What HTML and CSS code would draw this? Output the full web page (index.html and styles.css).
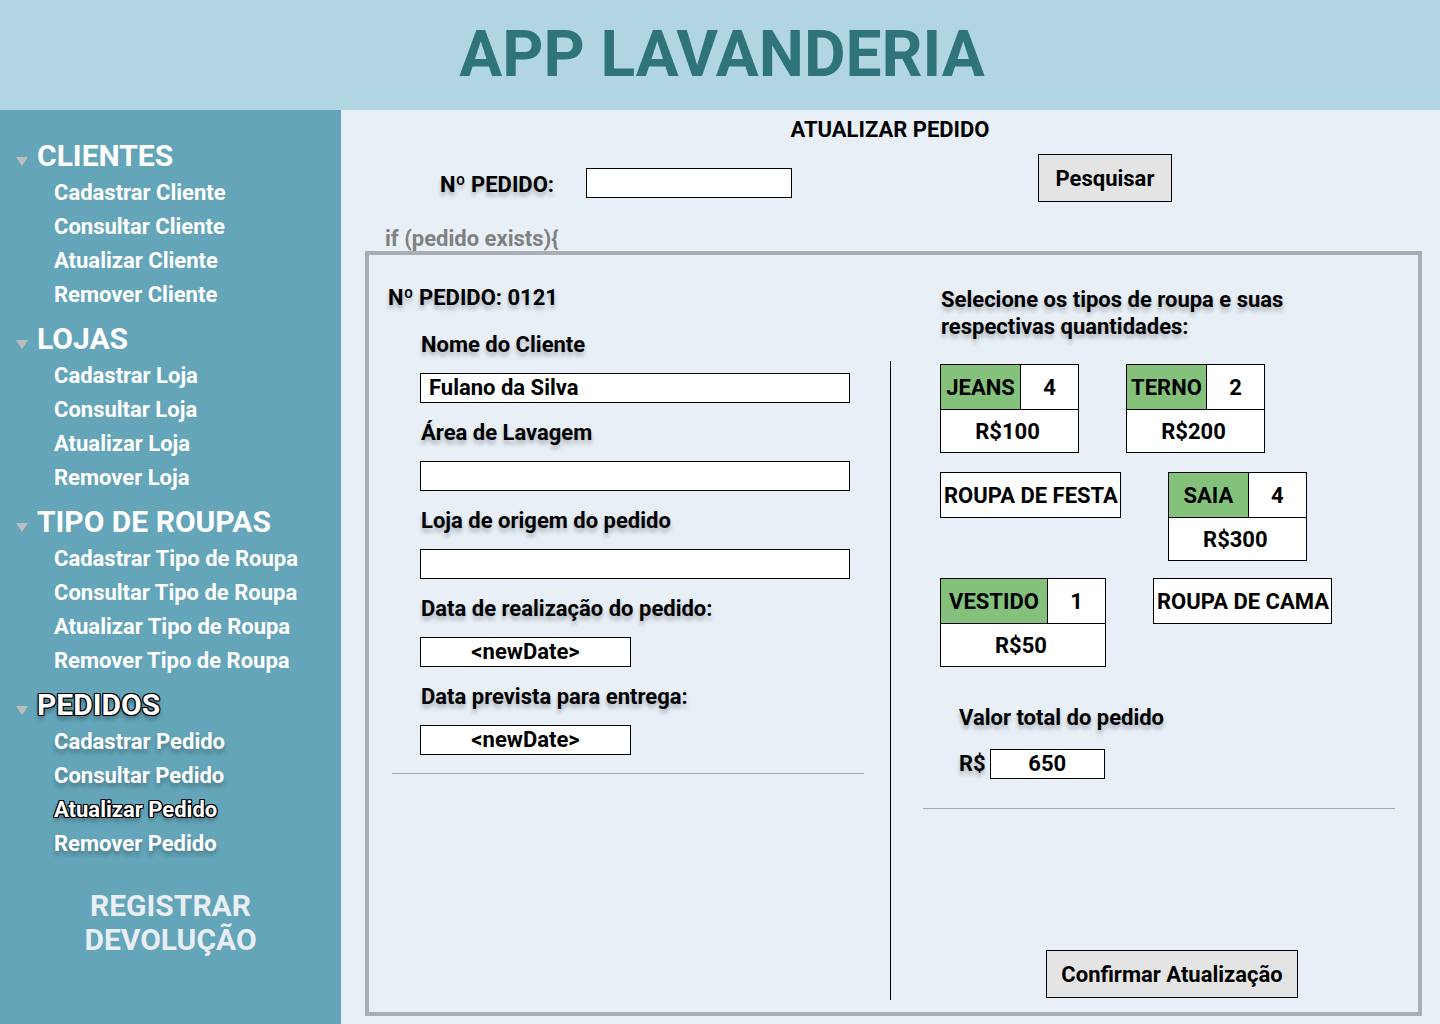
FILE: index.html
```
<!DOCTYPE html>
<html lang="pt-BR">
<head>
<meta charset="utf-8">
<title>App Lavanderia - Atualizar Pedido</title>
<link rel="stylesheet" href="styles.css">
</head>
<body>
<header class="topbar">
  <h1 class="app-title">APP LAVANDERIA</h1>
</header>
<div class="layout">
  <nav class="sidebar">
    <div class="nav-group">
      <div class="nav-heading"><span class="caret"></span>CLIENTES</div>
      <ul class="nav-items">
        <li>Cadastrar Cliente</li>
        <li>Consultar Cliente</li>
        <li>Atualizar Cliente</li>
        <li>Remover Cliente</li>
      </ul>
    </div>
    <div class="nav-group">
      <div class="nav-heading"><span class="caret"></span>LOJAS</div>
      <ul class="nav-items">
        <li>Cadastrar Loja</li>
        <li>Consultar Loja</li>
        <li>Atualizar Loja</li>
        <li>Remover Loja</li>
      </ul>
    </div>
    <div class="nav-group">
      <div class="nav-heading"><span class="caret"></span>TIPO DE ROUPAS</div>
      <ul class="nav-items">
        <li>Cadastrar Tipo de Roupa</li>
        <li>Consultar Tipo de Roupa</li>
        <li>Atualizar Tipo de Roupa</li>
        <li>Remover Tipo de Roupa</li>
      </ul>
    </div>
    <div class="nav-group">
      <div class="nav-heading"><span class="caret"></span><span class="outlined">PEDIDOS</span></div>
      <ul class="nav-items shadowed">
        <li>Cadastrar Pedido</li>
        <li>Consultar Pedido</li>
        <li class="outlined">Atualizar Pedido</li>
        <li>Remover Pedido</li>
      </ul>
    </div>
    <div class="nav-extra">REGISTRAR<br>DEVOLUÇÃO</div>
  </nav>

  <main class="main">
    <h2 class="page-title">ATUALIZAR PEDIDO</h2>
    <div class="search-row">
      <span class="search-label shadowed">Nº PEDIDO:</span>
      <div class="box search-input"></div>
      <button class="btn search-btn" type="button">Pesquisar</button>
    </div>
    <div class="cond">if (pedido exists){</div>

    <section class="panel">
      <div class="col-left">
        <div class="order-no shadowed">Nº PEDIDO: 0121</div>
        <div class="fields">
          <div class="field">
            <div class="field-label shadowed">Nome do Cliente</div>
            <div class="box input">Fulano da Silva</div>
          </div>
          <div class="field">
            <div class="field-label shadowed">Área de Lavagem</div>
            <div class="box input"></div>
          </div>
          <div class="field">
            <div class="field-label shadowed">Loja de origem do pedido</div>
            <div class="box input"></div>
          </div>
          <div class="field">
            <div class="field-label shadowed">Data de realização do pedido:</div>
            <div class="box date">&lt;newDate&gt;</div>
          </div>
          <div class="field">
            <div class="field-label shadowed">Data prevista para entrega:</div>
            <div class="box date">&lt;newDate&gt;</div>
          </div>
        </div>
        <hr class="sep sep-left">
      </div>

      <div class="divider"></div>

      <div class="col-right">
        <div class="select-heading shadowed">Selecione os tipos de roupa e suas<br>respectivas quantidades:</div>
        <div class="cards">
          <div class="card-row">
            <div class="card">
              <div class="card-top"><span class="card-name">JEANS</span><span class="card-qty">4</span></div>
              <div class="card-price">R$100</div>
            </div>
            <div class="card">
              <div class="card-top"><span class="card-name">TERNO</span><span class="card-qty">2</span></div>
              <div class="card-price">R$200</div>
            </div>
          </div>
          <div class="card-row card-row-tight">
            <div class="tag">ROUPA DE FESTA</div>
            <div class="card">
              <div class="card-top"><span class="card-name">SAIA</span><span class="card-qty">4</span></div>
              <div class="card-price">R$300</div>
            </div>
          </div>
          <div class="card-row">
            <div class="card">
              <div class="card-top"><span class="card-name card-name-wide">VESTIDO</span><span class="card-qty">1</span></div>
              <div class="card-price">R$50</div>
            </div>
            <div class="tag">ROUPA DE CAMA</div>
          </div>
        </div>

        <div class="total">
          <div class="total-label shadowed">Valor total do pedido</div>
          <div class="total-row">
            <span class="currency shadowed">R$</span>
            <div class="box total-box">650</div>
          </div>
        </div>
        <hr class="sep sep-right">
        <button class="btn confirm-btn" type="button">Confirmar Atualização</button>
      </div>
    </section>
  </main>
</div>
</body>
</html>
```

FILE: styles.css
```
* { box-sizing: border-box; }

html, body {
  margin: 0;
  padding: 0;
}

body {
  width: 1440px;
  height: 1024px;
  overflow: hidden;
  font-family: Roboto, "Noto Sans", "Liberation Sans", sans-serif;
  background: #e8eff7;
  color: #000;
}

/* ---------- header ---------- */
.topbar {
  height: 110px;
  background: #b1d6e1;
  display: flex;
  align-items: center;
  justify-content: center;
}

.app-title {
  margin: 0 0 0 4px;
  font-size: 64px;
  line-height: 1;
  font-weight: 700;
  color: #2f7479;
}

/* ---------- layout ---------- */
.layout {
  display: flex;
  height: 914px;
}

/* ---------- sidebar ---------- */
.sidebar {
  width: 341px;
  flex: none;
  background: #64a5b9;
  padding-top: 25px;
  color: #fff;
}

.nav-group {
  margin-bottom: 6px;
}

.nav-heading {
  display: flex;
  align-items: center;
  height: 41px;
  padding-left: 16px;
  font-size: 30px;
  font-weight: 700;
}

.caret {
  width: 0;
  height: 0;
  border-left: 6.5px solid transparent;
  border-right: 6.5px solid transparent;
  border-top: 9px solid #bdbdbd;
  margin-right: 9px;
  margin-top: 12px;
}

.nav-items {
  list-style: none;
  margin: 0;
  padding: 0 0 0 54px;
}

.nav-items li {
  height: 34px;
  line-height: 34px;
  font-size: 22px;
  font-weight: 700;
}

.nav-extra {
  margin-top: 28px;
  text-align: center;
  font-size: 30px;
  line-height: 34px;
  font-weight: 700;
  color: #e8eef3;
}

.shadowed {
  text-shadow: 0 4px 4px rgba(0, 0, 0, 0.25);
}

.outlined {
  text-shadow: -1px -1px 0 #000, 1px -1px 0 #000, -1px 1px 0 #000, 1px 1px 0 #000,
    0 -1px 0 #000, 0 1px 0 #000, -1px 0 0 #000, 1px 0 0 #000,
    0 4px 4px rgba(0, 0, 0, 0.35);
}

/* ---------- main ---------- */
.main {
  flex: 1;
  display: flex;
  flex-direction: column;
  padding: 8px 18px 8px 24px;
}

.page-title {
  margin: 0;
  padding-right: 7px;
  text-align: center;
  font-size: 22px;
  line-height: 24px;
  font-weight: 700;
}

.search-row {
  display: flex;
  align-items: flex-start;
  margin-top: 12px;
  padding-left: 75px;
}

.search-label {
  width: 146px;
  flex: none;
  margin-top: 19px;
  font-size: 22px;
  line-height: 24px;
  font-weight: 700;
}

.box {
  background: #fff;
  border: 1px solid #000;
  font-size: 22px;
  font-weight: 700;
  line-height: 28px;
}

.search-input {
  width: 206px;
  height: 30px;
  margin-top: 14px;
}

.btn {
  font-family: inherit;
  font-size: 22px;
  font-weight: 700;
  color: #000;
  background: #e4e4e4;
  border: 1px solid #000;
  padding: 0;
  height: 48px;
}

.search-btn {
  width: 134px;
  margin-left: 246px;
}

.cond {
  margin-top: 25px;
  padding-left: 20px;
  font-size: 22px;
  line-height: 24px;
  font-weight: 700;
  color: #808080;
}

/* ---------- panel ---------- */
.panel {
  flex: 1;
  margin-top: 0;
  border: 4px solid #a9aeb5;
  display: grid;
  grid-template-columns: 521px 1px 1fr;
}

.col-left {
  padding: 31px 0 0 19px;
}

.order-no {
  font-size: 22px;
  line-height: 24px;
  font-weight: 700;
}

.fields {
  margin-top: 23px;
  padding-left: 32px;
}

.field {
  margin-bottom: 18px;
}

.field-label {
  padding-left: 1px;
  font-size: 22px;
  line-height: 24px;
  font-weight: 700;
}

.input {
  width: 430px;
  height: 30px;
  margin-top: 16px;
  padding-left: 8px;
}

.date {
  width: 211px;
  height: 30px;
  margin-top: 16px;
  text-align: center;
}

.sep {
  border: 0;
  border-top: 1px solid #a9a9a9;
  height: 0;
  width: 472px;
}

.sep-left {
  margin: 2px 0 0 4px;
}

.divider {
  background: #000;
  margin: 106px 0 12px;
}

.col-right {
  display: flex;
  flex-direction: column;
  align-items: flex-start;
  padding: 31px 0 14px 49px;
}

.select-heading {
  padding-left: 1px;
  font-size: 22px;
  line-height: 27px;
  font-weight: 700;
}

.cards {
  margin-top: 24px;
}

.card-row {
  display: flex;
  align-items: flex-start;
  gap: 47px;
  margin-bottom: 19px;
}

.card-row-tight {
  margin-bottom: 17px;
}

.card {
  border: 1px solid #000;
  background: #fff;
  font-size: 22px;
  font-weight: 700;
}

.card-top {
  display: flex;
  height: 45px;
  border-bottom: 1px solid #000;
}

.card-name {
  width: 80px;
  background: #84c17b;
  border-right: 1px solid #000;
  display: flex;
  align-items: center;
  justify-content: center;
}

.card-name-wide {
  width: 107px;
}

.card-qty {
  width: 57px;
  display: flex;
  align-items: center;
  justify-content: center;
}

.card-price {
  height: 42px;
  display: flex;
  align-items: center;
  justify-content: center;
  padding-right: 4px;
}

.tag {
  height: 46px;
  border: 1px solid #000;
  background: #fff;
  padding: 0 2px 0 3px;
  display: flex;
  align-items: center;
  font-size: 22px;
  font-weight: 700;
}

.total {
  margin-top: 20px;
  padding-left: 19px;
}

.total-label {
  font-size: 22px;
  line-height: 24px;
  font-weight: 700;
}

.total-row {
  display: flex;
  align-items: center;
  margin-top: 19px;
}

.currency {
  font-size: 22px;
  line-height: 24px;
  font-weight: 700;
  margin-right: 4px;
}

.total-box {
  width: 115px;
  height: 30px;
  text-align: center;
}

.sep-right {
  margin: 29px 0 0 -17px;
}

.confirm-btn {
  width: 252px;
  margin-top: auto;
  margin-left: 106px;
}
```
